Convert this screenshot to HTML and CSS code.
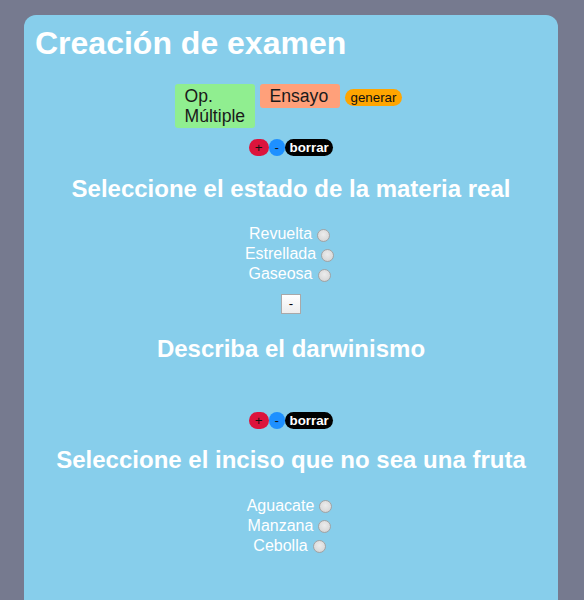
FILE: index.html
```html
<!DOCTYPE html>
<html lang="es">
<head>
<meta charset="utf-8">
<title>Creación de examen</title>
<link rel="stylesheet" href="styles.css">
</head>
<body>
<main class="card">
  <h1 class="title">Creación de examen</h1>

  <div class="type-row">
    <div class="type type-multi">Op. Múltiple</div>
    <div class="type type-essay">Ensayo</div>
    <button class="generate">generar</button>
  </div>

  <div class="ctrl-row ctrl-first">
    <button class="ctrl ctrl-add">+</button><button class="ctrl ctrl-remove">-</button><button class="ctrl ctrl-delete">borrar</button>
  </div>

  <h2 class="question">Seleccione el estado de la materia real</h2>
  <div class="options">
    <label class="option">Revuelta<input type="radio" name="q1" class="radio"></label>
    <label class="option">Estrellada<input type="radio" name="q1" class="radio"></label>
    <label class="option">Gaseosa<input type="radio" name="q1" class="radio"></label>
  </div>
  <div class="minus-row"><button class="minus">-</button></div>

  <h2 class="question question-essay">Describa el darwinismo</h2>

  <div class="ctrl-row ctrl-second">
    <button class="ctrl ctrl-add">+</button><button class="ctrl ctrl-remove">-</button><button class="ctrl ctrl-delete">borrar</button>
  </div>

  <h2 class="question">Seleccione el inciso que no sea una fruta</h2>
  <div class="options">
    <label class="option">Aguacate<input type="radio" name="q3" class="radio"></label>
    <label class="option">Manzana<input type="radio" name="q3" class="radio"></label>
    <label class="option">Cebolla<input type="radio" name="q3" class="radio"></label>
  </div>
</main>
</body>
</html>
```

FILE: styles.css
```css
html, body {
  margin: 0;
  padding: 0;
  overflow: hidden;
}

body {
  background: #767a8f;
  font-family: "Liberation Sans", Arial, sans-serif;
}

.card {
  display: block;
  box-sizing: border-box;
  width: 534px;
  height: 585px;
  margin: 15px 0 0 24px;
  padding: 10px 11px;
  background: #87ceeb;
  border-radius: 12px 12px 0 0;
  color: #fff;
}

.title {
  margin: 0;
  font-size: 32px;
  line-height: 37px;
  font-weight: bold;
  color: #fff;
}

.type-row {
  display: flex;
  justify-content: center;
  align-items: baseline;
  gap: 5px;
  margin-top: 22px;
  padding-right: 5px;
}

.type {
  box-sizing: border-box;
  width: 80px;
  padding: 2px 9px 2px 10px;
  font-size: 17.6px;
  line-height: 20px;
  color: #1a1a1a;
  border-radius: 3px;
}

.type-multi { background: #90ee90; }
.type-essay { background: #ffa07a; }

.generate {
  font-family: "Liberation Sans", Arial, sans-serif;
  font-size: 13.33px;
  line-height: 15px;
  padding: 1px 6px;
  border: none;
  border-radius: 9px;
  background: #ffa500;
  color: #111;
}

.ctrl-row {
  display: flex;
  justify-content: center;
}

.ctrl-first { margin-top: 11px; }
.ctrl-second { margin-top: 50px; }

.ctrl {
  font-family: "Liberation Sans", Arial, sans-serif;
  font-size: 13.33px;
  line-height: 15px;
  height: 17px;
  padding: 1px 6px;
  border: none;
  border-radius: 9px;
  color: #111;
}

.ctrl-add { background: #dc143c; }
.ctrl-remove { background: #1e90ff; }
.ctrl-delete {
  background: #000;
  color: #fff;
  font-weight: bold;
  padding: 1px 4.5px;
}

.question {
  margin: 19px 0 0;
  font-size: 24px;
  line-height: 27.6px;
  font-weight: bold;
  text-align: center;
  color: #fff;
}

.question-essay { margin-top: 21px; }
.ctrl-second + .question { margin-top: 17px; }

.options {
  display: flex;
  flex-direction: column;
  margin-top: 22px;
}

.option {
  display: flex;
  justify-content: center;
  align-items: center;
  height: 20px;
  font-size: 16px;
  line-height: 18.4px;
  color: #fff;
}

.radio {
  appearance: none;
  -webkit-appearance: none;
  box-sizing: border-box;
  width: 13px;
  height: 13px;
  margin: 1px 3px 0 5px;
  border: 1px solid #a3a3a3;
  border-radius: 50%;
  background: radial-gradient(circle at 50% 40%, #ececec 0%, #dcdcdc 60%, #c8c8c8 100%);
}

.minus-row {
  display: flex;
  justify-content: center;
  margin-top: 9px;
}

.minus {
  box-sizing: border-box;
  width: 20px;
  height: 20px;
  padding: 0;
  font-family: "Liberation Sans", Arial, sans-serif;
  font-size: 13.33px;
  line-height: 18px;
  border: 1px solid #a9a9a9;
  border-radius: 0;
  background: linear-gradient(#ffffff, #ededed);
  color: #000;
}
```
